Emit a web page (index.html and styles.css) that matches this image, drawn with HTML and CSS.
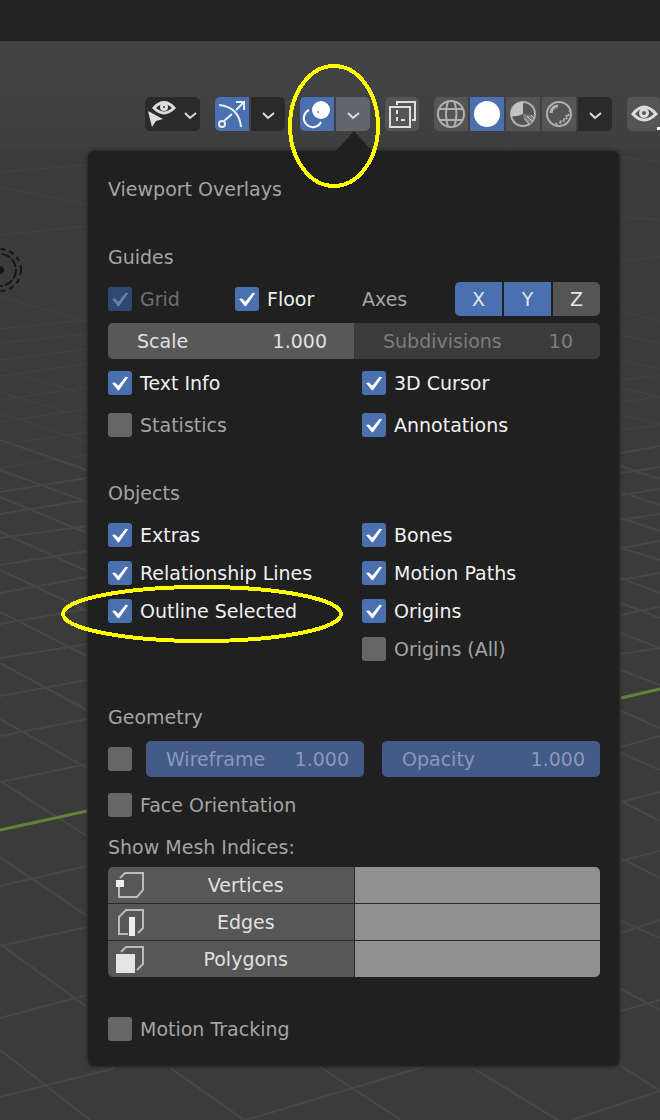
FILE: index.html
```html
<!DOCTYPE html>
<html lang="en">
<head>
<meta charset="utf-8">
<meta name="viewport" content="width=device-width, initial-scale=1">
<title>Viewport Overlays</title>
<link rel="stylesheet" href="styles.css">
</head>
<body>
<svg class="viewport-grid" viewBox="0 0 660 1120" preserveAspectRatio="xMidYMin slice" aria-hidden="true">
  <g class="grid-far">
    <path d="M0 172L87 165M0 235L87 226M0 187L87 204M0 329L87 320M0 343L87 334M0 360L87 349M0 376L87 364M0 296L87 322M0 369L87 395M0 392L87 418M0 413L87 442M0 400L87 387M0 422L87 409M0 445L87 432M0 468L87 455M621 157L660 162M621 217L660 220M621 261L660 257M621 310L660 322M621 335L660 343M621 360L660 369M621 388L660 397M621 402L660 397M621 415L660 424M621 380L660 375M621 430L660 425"/>
  </g>
  <g class="grid-near">
    <path d="M0 492L87 478M0 514L87 500M0 538L87 526M0 565L87 551M0 593L87 577M0 624L87 609M0 658L87 644M0 696L87 680M0 736L87 719M0 782L87 764M0 886L87 866M0 946L87 927M0 1018L87 995M0 1097L115 1068M246 1120L423 1067M572 1120L660 1091"/>
    <path d="M0 440L87 470M0 470L87 502M0 497L87 533M0 532L87 571M0 570L87 611M0 612L87 656M0 663L87 710M0 719L87 768M0 781L87 836M0 857L87 916M0 944L87 1007M0 1050L90 1120M169 1067L244 1120M320 1067L401 1120M471 1067L558 1120M621 1066L660 1091"/>
    <path d="M621 466L660 479M621 492L660 505M621 518L660 531M621 548L660 560M621 578L660 593M621 603L660 618M621 633L660 648M621 670L660 685M621 711L660 728M621 753L660 770M621 801L660 821M621 858L660 878M621 921L660 938M621 989L660 1010"/>
    <path d="M621 453L660 446M621 473L660 467M621 495L660 489M621 520L660 514M621 548L660 541M621 580L660 573M621 615L660 607M621 654L660 648M621 747L660 736M621 802L660 792M621 861L660 851M621 933L660 920M621 1011L660 1000"/>
  </g>
  <path class="axis-line" d="M0 830L87 811M621 698L660 689"/>
  <g class="lamp">
    <circle cx="0" cy="270" r="3" fill="#111"/>
    <circle cx="0" cy="270" r="16" stroke-dasharray="9 2"/>
    <circle cx="0" cy="270" r="21" stroke-dasharray="5 4"/>
  </g>
</svg>

<div class="app-bar"></div>
<header class="viewport-header"></header>

<nav class="toolbar" aria-label="Viewport tools">
  <div class="group dark">
    <button class="tool visibility" aria-label="Object type visibility">
      <svg width="55" height="34" viewBox="0 0 55 34">
        <path d="M3 14L7 30L11 24L18 22Z" fill="#ddd"/>
        <path d="M9 11Q19 0 29 11Q19 21 9 11Z" fill="none" stroke="#ddd" stroke-width="3"/>
        <circle cx="19" cy="10" r="4" fill="#ddd"/><circle cx="19" cy="10" r="1" fill="#333"/>
        <path d="M40 16L45 21L51 16" fill="none" stroke="#ddd" stroke-width="2"/>
      </svg>
    </button>
  </div>
  <div class="group">
    <button class="tool active" aria-label="Show gizmos">
      <svg width="34" height="34" viewBox="0 0 34 34" fill="none" stroke="#e8eef8" stroke-width="2">
        <circle cx="7" cy="27" r="3"/><path d="M9 24L17 17M21 13L28 6M21 5H29V13"/>
        <path d="M4 8Q24 10 26 30"/>
      </svg>
    </button>
    <button class="tool dark" aria-label="Gizmo options"><svg width="34" height="34" viewBox="0 0 34 34"><path d="M12 16L17 21L23 16" fill="none" stroke="#ddd" stroke-width="2"/></svg></button>
  </div>
  <div class="group">
    <button class="tool active" aria-label="Show overlays">
      <svg width="34" height="34" viewBox="0 0 34 34">
        <path d="M9 13A9 9 0 1 0 21 25" fill="none" stroke="#fff" stroke-width="2"/>
        <circle cx="21" cy="13" r="9" fill="#fff"/><circle cx="18" cy="15" r="1" fill="#8a94b0"/>
      </svg>
    </button>
    <button class="tool open" aria-label="Overlay options" aria-expanded="true"><svg width="34" height="34" viewBox="0 0 34 34"><path d="M12 16L17 21L23 16" fill="none" stroke="#ddd" stroke-width="2"/></svg></button>
  </div>
  <div class="group">
    <button class="tool" aria-label="Toggle X-ray">
      <svg width="34" height="34" viewBox="0 0 34 34" fill="none" stroke="#ddd" stroke-width="2">
        <path d="M5 10H25V30H5ZM12 8V5H30V23H27"/><path d="M12 13V23H22" stroke-dasharray="4 3"/>
      </svg>
    </button>
  </div>
  <div class="group">
    <button class="tool" aria-label="Wireframe shading">
      <svg width="34" height="34" viewBox="0 0 34 34" fill="none" stroke="#b0b0b0" stroke-width="2">
        <circle cx="17" cy="17" r="13"/><path d="M14 4Q10 17 14 30M20 4Q25 17 20 30M5 12H29M5 23H29"/>
      </svg>
    </button>
    <button class="tool active" aria-label="Solid shading">
      <svg width="34" height="34" viewBox="0 0 34 34"><circle cx="17" cy="17" r="13" fill="#fff"/></svg>
    </button>
    <button class="tool" aria-label="Material preview">
      <svg width="34" height="34" viewBox="0 0 34 34">
        <circle cx="17" cy="17" r="12" fill="none" stroke="#b0b0b0" stroke-width="2"/>
        <path d="M17 17V5A12 12 0 0 0 5 19Q11 20 17 17Z" fill="#c4c4c4"/>
        <path d="M17 17Q17 24 24 28L29 19Z" fill="#808080"/><path d="M18 21L24 28M21 19L27 25M25 18L28 21" stroke="#c4c4c4"/>
      </svg>
    </button>
    <button class="tool" aria-label="Rendered shading">
      <svg width="34" height="34" viewBox="0 0 34 34" fill="none" stroke="#b0b0b0" stroke-width="2">
        <circle cx="17" cy="17" r="12"/><path d="M9 16Q10 9 16 9" stroke-width="3"/>
        <path d="M28 13Q26 26 12 27M25 18Q22 24 16 25" stroke-dasharray="2 2"/>
      </svg>
    </button>
    <button class="tool dark" aria-label="Shading options"><svg width="34" height="34" viewBox="0 0 34 34"><path d="M12 16L17 21L23 16" fill="none" stroke="#ddd" stroke-width="2"/></svg></button>
  </div>
  <div class="group">
    <button class="tool" aria-label="View">
      <svg width="34" height="34" viewBox="0 0 34 34">
        <path d="M6 17Q17 3 29 17Q17 29 6 17Z" fill="none" stroke="#ddd" stroke-width="3"/>
        <circle cx="17" cy="16" r="5" fill="#ddd"/><circle cx="17" cy="16" r="2" fill="#555"/><path d="M30 30H34V33H30Z" fill="#fff"/>
      </svg>
    </button>
  </div>
</nav>

<main class="popover">
  <h1>Viewport Overlays</h1>

  <section>
    <h2>Guides</h2>
    <div class="rows spaced">
      <div class="columns">
        <div class="columns">
          <label class="check"><input type="checkbox" checked disabled>Grid</label>
          <label class="check"><input type="checkbox" checked>Floor</label>
        </div>
        <div class="axes">
          <span>Axes</span>
          <div class="axis-buttons">
            <button class="on" aria-pressed="true">X</button>
            <button class="on" aria-pressed="true">Y</button>
            <button aria-pressed="false">Z</button>
          </div>
        </div>
      </div>
      <div class="joined">
        <label class="field">Scale<input type="text" value="1.000"></label>
        <label class="field muted">Subdivisions<input type="text" value="10" disabled></label>
      </div>
      <div class="columns">
        <label class="check"><input type="checkbox" checked>Text Info</label>
        <label class="check"><input type="checkbox" checked>3D Cursor</label>
      </div>
      <div class="columns">
        <label class="check"><input type="checkbox">Statistics</label>
        <label class="check"><input type="checkbox" checked>Annotations</label>
      </div>
    </div>
  </section>

  <section>
    <h2>Objects</h2>
    <div class="columns">
      <div class="rows">
        <label class="check"><input type="checkbox" checked>Extras</label>
        <label class="check"><input type="checkbox" checked>Relationship Lines</label>
        <label class="check"><input type="checkbox" checked>Outline Selected</label>
      </div>
      <div class="rows">
        <label class="check"><input type="checkbox" checked>Bones</label>
        <label class="check"><input type="checkbox" checked>Motion Paths</label>
        <label class="check"><input type="checkbox" checked>Origins</label>
        <label class="check"><input type="checkbox">Origins (All)</label>
      </div>
    </div>
  </section>

  <section>
    <h2>Geometry</h2>
    <div class="wire-row">
      <label class="check"><input type="checkbox" aria-label="Show wireframe"></label>
      <label class="field slider">Wireframe<input type="text" value="1.000" disabled></label>
      <label class="field slider">Opacity<input type="text" value="1.000" disabled></label>
    </div>
    <label class="check face"><input type="checkbox">Face Orientation</label>
    <h2>Show Mesh Indices:</h2>
    <div class="mesh">
      <button>
        <svg width="30" height="28" viewBox="0 0 30 28" fill="none" stroke="#bbb" stroke-width="2"><path d="M4 7L9 2H27V19L21 26H3V16"/><path d="M0 9H8V16H0Z" fill="#eee" stroke="none"/></svg>
        <span>Vertices</span>
      </button>
      <input type="text" aria-label="Vertices value">
      <button>
        <svg width="30" height="28" viewBox="0 0 30 28" fill="none" stroke="#bbb" stroke-width="2"><path d="M12 26H3V9L10 2H27V20L22 25"/><path d="M13 9H19V28H13Z" fill="#eee" stroke="none"/></svg>
        <span>Edges</span>
      </button>
      <input type="text" aria-label="Edges value">
      <button>
        <svg width="30" height="28" viewBox="0 0 30 28" fill="none" stroke="#bbb" stroke-width="2"><path d="M5 7L10 2H27V19L21 25"/><path d="M0 9H19V28H0Z" fill="#e4e4e4" stroke="none"/></svg>
        <span>Polygons</span>
      </button>
      <input type="text" aria-label="Polygons value">
    </div>
  </section>

  <section>
    <label class="check"><input type="checkbox">Motion Tracking</label>
  </section>
</main>

<svg class="markup" viewBox="0 0 660 1120" preserveAspectRatio="xMidYMin slice" aria-hidden="true">
  <ellipse cx="334" cy="126" rx="44" ry="60"/>
  <ellipse cx="202" cy="614" rx="139" ry="27"/>
</svg>
</body>
</html>
```
FILE: styles.css
```css
* { box-sizing: border-box; }

body {
  position: relative;
  margin: 0;
  min-height: 100vh;
  overflow-x: hidden;
  background: #3b3b3b;
  color: #a4a4a4;
  font: 19px/38px "DejaVu Sans", sans-serif;
}

button, input { font: inherit; color: inherit; border: 0; margin: 0; padding: 0; }

h1, h2 { margin: 0; font-size: 19px; font-weight: 400; }

svg { display: block; }

.viewport-grid, .markup {
  position: absolute;
  top: 0;
  left: 0;
  width: 100%;
  height: 100%;
  pointer-events: none;
}

.viewport-grid { z-index: -1; fill: none; }
.grid-far { stroke: #434343; stroke-width: 1; }
.grid-near { stroke: #474747; stroke-width: 2; }
.axis-line { stroke: #668237; stroke-width: 3; }
.lamp { stroke: #151515; stroke-width: 2; }
.markup { fill: none; stroke: #ffff00; stroke-width: 4; shape-rendering: crispEdges; }

.app-bar { height: 41px; background: #222222; }
.viewport-header { height: 50px; background: #434343; }

.toolbar {
  display: flex;
  justify-content: flex-end;
  gap: 15px;
  margin-right: -1px;
  padding: 6px 0 20px;
  background: linear-gradient(#424242, #3e3e3e);
}

.group { display: flex; gap: 2px; }
.tool { position: relative; height: 34px; width: 34px; background: #555555; }
.tool.visibility { width: 55px; background: #2a2a2a; }
.tool.dark { background: #2a2a2a; }
.tool.active { background: #4a70b0; }
.tool.open { background: #62656d; }
.tool:first-child { border-radius: 5px 0 0 5px; }
.tool:last-child { border-radius: 0 5px 5px 0; }
.tool:only-child { border-radius: 5px; }

.tool.open::after {
  content: "";
  position: absolute;
  top: 34px;
  left: 0;
  width: 36px;
  height: 20px;
  background: #202020;
  clip-path: polygon(50% 0, 100% 100%, 0 100%);
}

.popover {
  display: flex;
  flex-direction: column;
  gap: 30px;
  margin: 0 41px 54px 88px;
  padding: 19px 19px 18px 20px;
  border-radius: 6px;
  background: #202020;
  box-shadow: 0 0 4px #1a1a1a;
}

.rows, .columns, .joined { display: grid; }
.rows { align-content: start; }
.rows.spaced { gap: 4px; }
.columns { grid-template-columns: 1fr 1fr; column-gap: 16px; }
section > h2 { padding-bottom: 4px; }

.check { display: flex; align-items: center; gap: 8px; height: 38px; white-space: nowrap; }
.check:has(input:checked) { color: #f0f0f0; }
.check:has(input:disabled) { color: #6f6f6f; }

.check input {
  appearance: none;
  flex: none;
  width: 24px;
  height: 24px;
  border-radius: 3px;
  background: #666666;
}
.check input:checked { background: #4a70b0; }
.check input:disabled { background: #2f4873; }

.check input:checked::before {
  content: "";
  display: block;
  width: 24px;
  height: 24px;
  background: #ffffff;
  clip-path: polygon(17% 50%, 29% 48%, 43% 61%, 73% 24%, 84% 26%, 46% 80%, 41% 80%);
}
.check input:disabled::before { background: #6680a8; }

.axes { display: flex; align-items: center; justify-content: space-between; }
.axis-buttons { display: grid; grid-template-columns: repeat(3, 1fr); gap: 2px; width: 145px; border-radius: 5px; overflow: hidden; }
.axis-buttons button { height: 34px; background: #555555; color: #e6e6e6; line-height: 34px; }
.axis-buttons .on { background: #4a70b0; }

.joined { grid-template-columns: 1fr 1fr; padding: 1px 0; border-radius: 5px; }
.field {
  display: flex;
  align-items: center;
  min-width: 0;
  height: 36px;
  padding: 0 27px 0 29px;
  border-radius: 5px 0 0 5px;
  background: #585858;
  color: #e0e0e0;
}
.field input { flex: 1; width: 0; min-width: 0; background: none; text-align: right; }
.field.muted { border-radius: 0 5px 5px 0; background: #3b3b3b; color: #7c7c7c; }

.wire-row { display: grid; grid-template-columns: 20px 1fr 1fr; gap: 18px; align-items: center; }
.field.slider { height: 36px; padding: 0 15px 0 20px; border-radius: 5px; background: #435a87; color: #8799bb; }

.face { margin: 8px 0 4px; }
.face + h2 { padding-bottom: 1px; }

.mesh { display: grid; grid-template-columns: 1fr 1fr; gap: 1px; margin-bottom: 3px; border-radius: 5px; overflow: hidden; background: #282828; }
.mesh button { display: flex; align-items: center; height: 36px; padding: 0 8px; background: #575757; color: #e0e0e0; }
.mesh span { flex: 1; }
.mesh input { width: 100%; min-width: 0; height: 36px; background: #909090; }
```
